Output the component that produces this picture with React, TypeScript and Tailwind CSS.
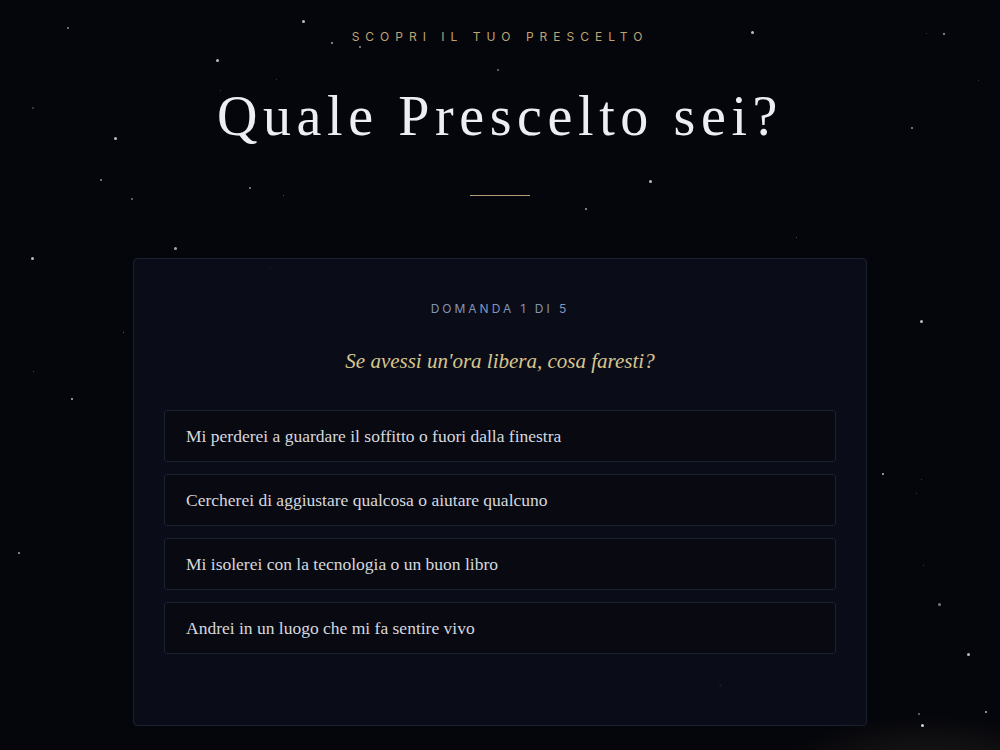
const stars: [number, number, number, number][] = [
  [68, 28, 2, 0.6], [303, 21, 3, 0.8], [332, 43, 2, 0.7], [360, 47, 2, 0.6], [217, 60, 3, 0.8],
  [33, 108, 2, 0.3], [115, 138, 3, 0.8], [101, 180, 2, 0.6], [132, 199, 2, 0.5], [250, 188, 2, 0.6],
  [283, 195, 1, 0.4], [175, 248, 3, 0.7], [32, 258, 3, 0.8], [271, 268, 2, 0.3], [123, 332, 1, 0.5],
  [33, 371, 1, 0.4], [276, 79, 1, 0.3], [220, 90, 1, 0.3], [498, 70, 2, 0.5], [752, 32, 3, 0.8],
  [944, 34, 2, 0.7], [926, 33, 1, 0.3], [978, 80, 1, 0.3], [912, 128, 2, 0.6], [650, 181, 3, 0.8],
  [586, 209, 2, 0.7], [796, 237, 1, 0.4], [921, 321, 3, 0.8], [72, 399, 2, 0.8], [19, 553, 2, 0.7],
  [883, 474, 2, 0.8], [921, 479, 1, 0.3], [916, 493, 1, 0.3], [923, 565, 1, 0.3], [939, 604, 3, 0.5],
  [968, 654, 3, 0.8], [720, 685, 3, 0.45], [919, 714, 2, 0.5], [922, 725, 3, 0.9], [986, 712, 2, 0.8],
];

const answers = [
  "Mi perderei a guardare il soffitto o fuori dalla finestra",
  "Cercherei di aggiustare qualcosa o aiutare qualcuno",
  "Mi isolerei con la tecnologia o un buon libro",
  "Andrei in un luogo che mi fa sentire vivo",
];

export default function App() {
  return (
    <div className="relative h-[750px] w-[1000px] overflow-hidden bg-[#05060b]">
      {/* starfield */}
      <div className="pointer-events-none absolute inset-0">
        {stars.map(([x, y, s, o], i) => (
          <span
            key={i}
            className="absolute rounded-full bg-[#e6e9f5]"
            style={{ left: x - s / 2, top: y - s / 2, width: s, height: s, opacity: o }}
          />
        ))}
        <div className="absolute left-[760px] top-[710px] h-[140px] w-[340px] rounded-full bg-[radial-gradient(ellipse_at_center,rgba(201,169,110,0.14),rgba(201,169,110,0)_65%)]" />
      </div>

      <div className="relative flex flex-col items-center pt-[29px]">
        <p className="font-['Inter',sans-serif] text-xs leading-4 tracking-[0.5em] text-[#bfa473]">
          SCOPRI IL TUO PRESCELTO
        </p>
        <h1 className="mt-[43px] font-['Liberation_Serif',serif] text-[56px] leading-[56px] tracking-[0.1em] text-[#eceef4]">
          Quale Prescelto sei?
        </h1>
        <div className="mt-[51px] h-px w-[60px] bg-[#b09a72]" />

        <div className="mt-[62px] w-[734px] rounded-[4px] border border-[#1c2131] bg-[#0b0e19]/90 px-[30px] pt-[42px] pb-[71px]">
          <p className="text-center font-['Inter',sans-serif] text-xs leading-4 tracking-[0.25em] text-[#8494b8]">
            DOMANDA 1 DI 5
          </p>
          <p className="mt-[30px] text-center font-['Liberation_Serif',serif] text-[21px] italic leading-7 text-[#d9c58e]">
            Se avessi un'ora libera, cosa faresti?
          </p>
          <div className="mt-[35px] flex flex-col gap-[12px]">
            {answers.map((a) => (
              <button
                key={a}
                className="flex h-[52px] items-center rounded-[3px] border border-[#1d2233] bg-[#090a11] px-[21px] text-left font-['Liberation_Serif',serif] text-[17.5px] text-[#d6d8df]"
              >
                {a}
              </button>
            ))}
          </div>
        </div>
      </div>
    </div>
  );
}
